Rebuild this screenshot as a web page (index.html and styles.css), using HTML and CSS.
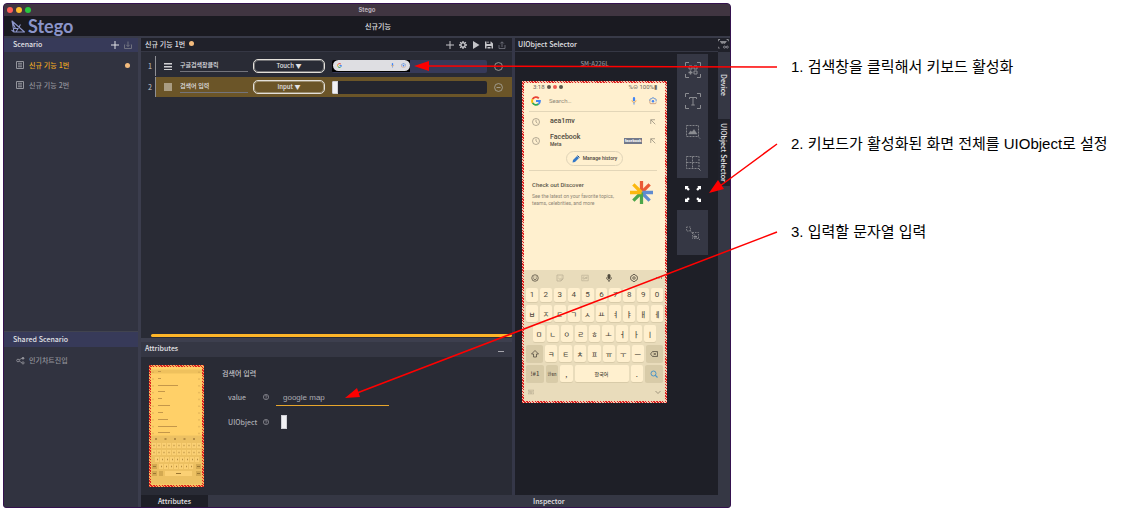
FILE: index.html
```html
<!DOCTYPE html>
<html lang="ko">
<head>
<meta charset="utf-8">
<title>Stego</title>
<link rel="stylesheet" href="styles.css">
</head>
<body>
<svg class="sprites" aria-hidden="true">
  <symbol id="plus" viewBox="0 0 16 16"><path d="M8 0v16M0 8h16" stroke="currentColor" stroke-width="2" fill="none"/></symbol>
  <symbol id="import" viewBox="0 0 16 16"><path d="M1 7v8h14V7M8 1v10M4.500 7.500 8 11l3.500-3.500" stroke="currentColor" stroke-width="1.800" fill="none"/></symbol>
  <symbol id="share-up" viewBox="0 0 16 16"><path d="M2 8v7h12V8M8 12V2M4.500 5 8 1.500 11.500 5" stroke="currentColor" stroke-width="1.600" fill="none"/></symbol>
  <symbol id="doc" viewBox="0 0 16 16"><path d="M1 1h14v14H1zM4 4.500h8M4 8h8M4 11.500h8" stroke="currentColor" stroke-width="2" fill="none"/></symbol>
  <symbol id="gear" viewBox="0 0 16 16"><circle cx="8" cy="8" r="4.300" fill="none" stroke="currentColor" stroke-width="3"/><path d="M8 0v3M8 13v3M0 8h3M13 8h3M2.300 2.300l2 2M11.700 11.700l2 2M2.300 13.700l2-2M11.700 4.300l2-2" stroke="currentColor" stroke-width="2.600"/></symbol>
  <symbol id="play" viewBox="0 0 16 16"><path d="M2 0l13 8-13 8z" fill="currentColor"/></symbol>
  <symbol id="save" viewBox="0 0 16 16"><path fill-rule="evenodd" d="M0 1h3v5h8V1h1l4 4v10h-3v-5H3v5H0zM5 1h2v3H5zM5 12h6v3H5z" fill="currentColor"/></symbol>
  <symbol id="minus-circle" viewBox="0 0 16 16"><circle cx="8" cy="8" r="7" fill="none" stroke="currentColor" stroke-width="1.500"/><path d="M4.500 8h7" stroke="currentColor" stroke-width="1.500"/></symbol>
  <symbol id="help" viewBox="0 0 16 16"><circle cx="8" cy="8" r="7" fill="none" stroke="currentColor" stroke-width="1.600"/><path d="M5.500 6.500c0-3.500 5-3 5-.3C10.500 8 8 8 8 10M8 11v2" stroke="currentColor" stroke-width="1.600" fill="none"/></symbol>
  <symbol id="share" viewBox="0 0 18 16"><path d="M4 8l9-5M4 8l9 5" stroke="currentColor" stroke-width="1.500"/><circle cx="4" cy="8" r="2.600" fill="#313340" stroke="currentColor" stroke-width="1.700"/><circle cx="14" cy="3.500" r="2.500" fill="currentColor"/><circle cx="14" cy="12.800" r="2.200" fill="#313340" stroke="currentColor" stroke-width="1.700"/></symbol>
  <symbol id="google" viewBox="0 0 20 20"><g fill="none" stroke-width="3.800"><path d="M15.600 4.600A7.800 7.800 0 0 0 3.200 6.200" stroke="#ea4335"/><path d="M3.200 6.200a7.800 7.800 0 0 0 0 7.600" stroke="#fbbc05"/><path d="M3.200 13.800a7.800 7.800 0 0 0 11.800 2.200" stroke="#34a853"/><path d="M15 16a7.800 7.800 0 0 0 2.800-6H10" stroke="#4285f4"/></g></symbol>
  <symbol id="mic" viewBox="0 0 12 18"><rect x="3.500" y="0" width="5" height="10" rx="2.500" fill="#4285f4"/><path d="M1.500 7.500c0 6 9 6 9 0" fill="none" stroke="#f0a03c" stroke-width="1.900"/><path d="M6 12v5" stroke="#4285f4" stroke-width="2"/></symbol>
  <symbol id="lens" viewBox="0 0 18 16"><path d="M2 8V5q0-2 2-2h2l1-2h4l1 2h2q2 0 2 2v4" fill="none" stroke="#4a83d6" stroke-width="1.900"/><path d="M2 7v5q0 2 2 2h10q2 0 2-3" fill="none" stroke="#c99777" stroke-width="1.900"/><circle cx="9" cy="8.500" r="2.800" fill="#4285f4"/></symbol>
  <symbol id="clock" viewBox="0 0 16 16"><circle cx="8" cy="8" r="7" fill="none" stroke="currentColor" stroke-width="1.400"/><path d="M8 3.500V8l3 2.500" fill="none" stroke="currentColor" stroke-width="1.400"/></symbol>
  <symbol id="nw" viewBox="0 0 12 12"><path d="M1.500 10V1.500H10M1.500 1.500l9 9" fill="none" stroke="currentColor" stroke-width="1.500"/></symbol>
  <symbol id="frame" viewBox="0 0 32 32"><path d="M1 8V1h7M24 1h7v7M31 24v7h-7M8 31H1v-7" fill="none" stroke="currentColor" stroke-width="2"/></symbol>
  <symbol id="corner" viewBox="0 0 12 12"><path d="M0 0h9L6.500 2.500l5 5-4 4-5-5L0 9z" fill="currentColor"/></symbol>
</svg>

<div class="app">
  <header class="titlebar">
    <div class="lights"><i class="red"></i><i class="yellow"></i><i class="green"></i></div>
    <span>Stego</span>
  </header>
  <div class="brandbar">
    <div class="brand">
      <svg class="logo" viewBox="0 0 30 26"><path d="M2 2 27 24H6zM2 2l7 15M5 17h9l5-8M14 17l-4 7M1 20l5 4" fill="none" stroke="currentColor" stroke-width="2.200" stroke-linejoin="round"/></svg>
      <span>Stego</span>
    </div>
    <span class="project">신규기능</span>
  </div>

  <div class="main">
    <aside class="sidebar">
      <section class="scenarios">
        <div class="side-head"><h2>Scenario</h2>
          <button aria-label="추가"><svg class="i8"><use href="#plus"/></svg></button>
          <button class="dim" aria-label="가져오기"><svg class="i8"><use href="#import"/></svg></button>
        </div>
        <a class="item active" href="#one"><svg class="i8"><use href="#doc"/></svg><span>신규 기능 1번</span><i class="dot"></i></a>
        <a class="item" href="#two"><svg class="i8"><use href="#doc"/></svg><span>신규 기능 2번</span></a>
      </section>
      <section class="shared">
        <div class="side-head"><h2>Shared Scenario</h2></div>
        <a class="item" href="#shared"><svg class="i9"><use href="#share"/></svg><span>인기차트진입</span></a>
      </section>
    </aside>

    <div class="workspace">
      <div class="panels">
        <main class="editor">
          <div class="head"><h2>신규 기능 1번</h2><i class="dot"></i>
            <div class="tools">
              <button aria-label="추가"><svg class="i8"><use href="#plus"/></svg></button>
              <button aria-label="설정"><svg class="i8"><use href="#gear"/></svg></button>
              <button aria-label="실행"><svg class="i8"><use href="#play"/></svg></button>
              <button aria-label="저장"><svg class="i8"><use href="#save"/></svg></button>
              <button class="dim" aria-label="내보내기"><svg class="i8"><use href="#share-up"/></svg></button>
            </div>
          </div>
          <div class="steps">
            <div class="step">
              <span class="num">1</span>
              <div class="step-body">
                <i class="grip"></i>
                <input class="name" aria-label="단계 이름" value="구글검색창클릭">
                <select aria-label="동작"><option>Touch ▼</option></select>
                <div class="target blue"><div class="shot"><div class="pill"><svg class="i5"><use href="#google"/></svg><svg class="i5 push"><use href="#mic"/></svg><svg class="i5"><use href="#lens"/></svg></div></div></div>
                <button aria-label="삭제"><svg class="i9"><use href="#minus-circle"/></svg></button>
              </div>
            </div>
            <div class="step selected">
              <span class="num">2</span>
              <div class="step-body">
                <i class="grip solid"></i>
                <input class="name" aria-label="단계 이름" value="검색어 입력">
                <select aria-label="동작"><option>Input ▼</option></select>
                <div class="target"><div class="chip"></div></div>
                <button aria-label="삭제"><svg class="i9"><use href="#minus-circle"/></svg></button>
              </div>
            </div>
          </div>
          <div class="scrollbar"></div>
          <section class="attributes">
            <div class="attr-head"><h2>Attributes</h2><button aria-label="접기"><i></i></button></div>
            <div class="attr-body">
              <svg class="thumb" viewBox="0 0 51 117">
                <path d="M0 2h51v4H0z" fill="#efc15d"/>
                <g stroke="#c4974a" stroke-width="1">
                  <path d="M7 4h3M7 11h3M7 18h20M7 24h7M7 31h4M7 38h12M7 45h5M7 52h10M7 59h19M7 65h12"/>
                  <path d="M2 4v64M48 4v64" stroke-dasharray="1.500 5.300" opacity=".7"/>
                </g>
                <path d="M0 68h51v49H0z" fill="#edc163"/>
                <path d="M4 71.500h44" stroke="#b58d44" stroke-width="2" stroke-dasharray="2 7.500"/>
                <g stroke="#fbd074" stroke-width="5" stroke-dasharray="4 1"><path d="M1 78h49M1 85h49M4 92h44M8 99h35"/><path d="M14 106h27" stroke-dasharray="none"/></g>
                <g stroke="#b58d44" stroke-width="1.500" stroke-dasharray="1 4"><path d="M2.500 78h48M2.500 85h48M6 92h42M10 99h33"/></g>
                <path d="M1 99h5M45 99h5M1 106h5M8 106h4M45 106h5" stroke="#d3a951" stroke-width="5"/>
                <path d="M25 106h5M2 106h3M46 106h3M2 99h3M46 99h3" stroke="#9c7732"/>
              </svg>
              <form class="fields">
                <h3>검색어 입력</h3>
                <div class="field"><label for="value">value</label><svg class="i6"><use href="#help"/></svg><input id="value" value="google map"></div>
                <div class="field"><label for="object">UIObject</label><svg class="i6"><use href="#help"/></svg><button type="button" id="object" class="chip"></button></div>
              </form>
            </div>
          </section>
        </main>

        <section class="selector">
          <div class="head"><h2>UIObject Selector</h2></div>
          <div class="selector-body">
            <div class="device">
              <p class="model">SM-A226L</p>
              <div class="phone">
                <div class="status"><span>3:18</span><i class="s1"></i><i class="s2"></i><i class="s1"></i><span class="right">%⊝ 100%▮</span></div>
                <div class="search"><svg class="i10"><use href="#google"/></svg><span>Search…</span><svg class="i8"><use href="#mic"/></svg><svg class="i8"><use href="#lens"/></svg></div>
                <div class="hist"><svg class="i8"><use href="#clock"/></svg><div>aea1mv</div><svg class="i6"><use href="#nw"/></svg></div>
                <div class="hist"><svg class="i8"><use href="#clock"/></svg><div>Facebook<small>Meta</small></div><b>facebook</b><svg class="i6"><use href="#nw"/></svg></div>
                <button class="manage"><svg class="i8" viewBox="0 0 16 16"><path d="M1 15l1-5 8-8 4 4-8 8z" fill="#3478c8"/><path d="M11 1l4 4" stroke="#224f88" stroke-width="2"/></svg>Manage history</button>
                <div class="discover">
                  <div><h4>Check out Discover</h4><p>See the latest on your favorite topics,<br>teams, celebrities, and more</p></div>
                  <svg class="spark" viewBox="0 0 24 24"><g stroke-width="3.400"><path d="M12 0v12" stroke="#ea5b35"/><path d="M12 12 20.500 3.500" stroke="#ea5b35"/><path d="M12 12h12M12 12l8.500 8.500" stroke="#5f8bd0"/><path d="M12 12v12M12 12l-8.500 8.500" stroke="#4ca64a"/><path d="M12 12H0M12 12 3.500 3.500" stroke="#fbb80f"/></g></svg>
                </div>
                <div class="keyboard">
                  <div class="kbar">
                    <svg class="i8" viewBox="0 0 16 16"><circle cx="8" cy="8" r="6.500" fill="none" stroke="currentColor" stroke-width="1.500"/><path d="M4.500 9q3.500 5 7 0M5.500 5v2M10.500 5v2" fill="none" stroke="currentColor" stroke-width="1.500"/></svg>
                    <svg class="i8 faint" viewBox="0 0 16 16"><path d="M2 2h12v8l-4 4H2zM14 10h-4v4M5 6h1M10 6h1M5 9q2 2 4 0" fill="none" stroke="currentColor" stroke-width="1.500"/></svg>
                    <svg class="i8 faint" viewBox="0 0 16 16"><path d="M1.500 2.500h13v11h-13zM4 6h3M4 6v4h3V8M9 6v4M11 10V6h2M11 8h2" fill="none" stroke="currentColor" stroke-width="1.300"/></svg>
                    <svg class="i8" viewBox="0 0 16 16"><rect x="5" y="0" width="6" height="10" rx="3" fill="currentColor"/><path d="M3 7c0 7 10 7 10 0M8 12v4" fill="none" stroke="currentColor" stroke-width="1.700"/></svg>
                    <svg class="i8" viewBox="0 0 16 16"><path d="M6 1h4l1 2 3 1 1 4-1 4-3 1-1 2H6l-1-2-3-1-1-4 1-4 3-1z" fill="none" stroke="currentColor" stroke-width="1.600"/><circle cx="8" cy="8" r="2.500" fill="none" stroke="currentColor" stroke-width="1.600"/></svg>
                    <svg class="i8" viewBox="0 0 16 16"><path d="M2 8h2M7 8h2M12 8h2" stroke="currentColor" stroke-width="2"/></svg>
                  </div>
                  <div class="keys nums"><kbd>1</kbd><kbd>2</kbd><kbd>3</kbd><kbd>4</kbd><kbd>5</kbd><kbd>6</kbd><kbd>7</kbd><kbd>8</kbd><kbd>9</kbd><kbd>0</kbd></div>
                  <div class="keys"><kbd>ㅂ</kbd><kbd>ㅈ</kbd><kbd>ㄷ</kbd><kbd>ㄱ</kbd><kbd>ㅅ</kbd><kbd>ㅛ</kbd><kbd>ㅕ</kbd><kbd>ㅑ</kbd><kbd>ㅐ</kbd><kbd>ㅔ</kbd></div>
                  <div class="keys inset"><kbd>ㅁ</kbd><kbd>ㄴ</kbd><kbd>ㅇ</kbd><kbd>ㄹ</kbd><kbd>ㅎ</kbd><kbd>ㅗ</kbd><kbd>ㅓ</kbd><kbd>ㅏ</kbd><kbd>ㅣ</kbd></div>
                  <div class="keys letters"><kbd class="fn"><svg class="i8" viewBox="0 0 16 16"><path d="M8 1l7 7h-4v6H5V8H1z" fill="none" stroke="currentColor" stroke-width="1.500"/></svg></kbd><kbd>ㅋ</kbd><kbd>ㅌ</kbd><kbd>ㅊ</kbd><kbd>ㅍ</kbd><kbd>ㅠ</kbd><kbd>ㅜ</kbd><kbd>ㅡ</kbd><kbd class="fn"><svg class="i8" viewBox="0 0 16 16"><path d="M5 3h10v10H5L1 8zM7 5.500l5 5M12 5.500l-5 5" fill="none" stroke="currentColor" stroke-width="1.500"/></svg></kbd></div>
                  <div class="keys bottom"><kbd class="fn sym">!#1</kbd><kbd class="fn lang">한⁄En</kbd><kbd>,</kbd><kbd class="space">한국어</kbd><kbd>.</kbd><kbd class="fn"><svg class="i8 find" viewBox="0 0 16 16"><circle cx="7" cy="7" r="5" fill="none" stroke="currentColor" stroke-width="2"/><path d="M10.500 10.500l4.500 4.500" stroke="currentColor" stroke-width="2.200"/></svg></kbd></div>
                  <div class="knav"><svg class="i6" viewBox="0 0 16 12"><path d="M1 1h14v10H1zM3 4h10M3 6.500h10M5 9h6" fill="none" stroke="currentColor" stroke-width="1.300" stroke-dasharray="2 1"/></svg><svg class="i6" viewBox="0 0 12 12"><path d="M1 4l5 5 5-5" fill="none" stroke="currentColor" stroke-width="1.600"/></svg></div>
                </div>
              </div>
            </div>
            <div class="toolbar">
              <button aria-label="QR"><svg viewBox="0 0 32 32"><use href="#frame"/><path d="M8 8h6v6H8zM18 8h6v6h-6zM18 18h6v6h-6z" fill="none" stroke="currentColor" stroke-width="2"/><path d="M11 17v8M7 21h8" stroke="currentColor" stroke-width="3"/></svg></button>
              <button aria-label="텍스트"><svg viewBox="0 0 32 32"><use href="#frame"/><path d="M9 12V9h14v3M16 9v15M12.500 24h7" fill="none" stroke="currentColor" stroke-width="2"/></svg></button>
              <button aria-label="이미지"><svg viewBox="0 0 32 32"><path d="M3 3h24v22H3z" fill="none" stroke="currentColor" stroke-width="1.800" stroke-dasharray="4 2"/><path d="M7 20l4-6 3 2 4-5 6 9zM26 25l5 5" fill="currentColor" stroke="currentColor"/></svg></button>
              <button aria-label="영역"><svg viewBox="0 0 32 32"><path d="M3 3h25v24H3zM15 3v24M3 15h25" fill="none" stroke="currentColor" stroke-width="1.800" stroke-dasharray="4 2"/><path d="M27 27l4 4" stroke="currentColor" stroke-width="2"/></svg></button>
              <button class="on" aria-label="전체 화면"><svg viewBox="0 0 32 32"><use href="#corner" width="10" height="10"/><use href="#corner" width="10" height="10" transform="translate(32 0) scale(-1 1)"/><use href="#corner" width="10" height="10" transform="translate(0 32) scale(1 -1)"/><use href="#corner" width="10" height="10" transform="translate(32 32) scale(-1 -1)"/></svg></button>
              <button class="tall" aria-label="상대 영역"><svg viewBox="0 0 32 32"><path d="M3 4h8v8H3zM15 15h12v12H15z" fill="none" stroke="currentColor" stroke-width="1.600" stroke-dasharray="3 2"/><path d="M9 10l12 12M27 27l4 4" stroke="currentColor" stroke-width="1.800" stroke-dasharray="4 2"/><path d="M17 22h7v3h-7z" fill="currentColor"/></svg></button>
            </div>
          </div>
        </section>
        <nav class="side-tabs">
          <svg class="capture" viewBox="0 0 32 28"><path d="M1 6V1h5M25 1h5v5M6 7h19M8 10h15M12 10v4M18 10v4" fill="none" stroke="currentColor" stroke-width="2.500"/><circle cx="19" cy="23" r="3" fill="none" stroke="currentColor" stroke-width="2.200"/><circle cx="27" cy="23" r="3" fill="none" stroke="currentColor" stroke-width="2.200"/><path d="M1 22v4h4" fill="none" stroke="currentColor" stroke-width="2"/></svg>
          <a href="#device">Device</a>
          <a class="current" href="#selector">UIObject Selector</a>
          <div class="rest"></div>
        </nav>
      </div>
      <footer class="bottom-tabs"><a class="current" href="#attributes">Attributes</a><a class="inspector" href="#inspector">Inspector</a></footer>
    </div>
  </div>
</div>

<ol class="notes">
  <li>1. 검색창을 클릭해서 키보드 활성화</li>
  <li>2. 키보드가 활성화된 화면 전체를 UIObject로 설정</li>
  <li>3. 입력할 문자열 입력</li>
</ol>

<svg class="arrows" viewBox="0 0 800 420" aria-hidden="true">
  <path d="M777 67 427 66M777 144l-57 42M777 232 357 393" stroke="#f00" stroke-width="1.500"/>
  <path d="M414 66l15-5v10zM709 193l9-13 6 9zM345 398l12-10 3 9z" fill="#f00"/>
</svg>
</body>
</html>
```
FILE: styles.css
```css
* { box-sizing: border-box; }
body {
  margin: 0;
  padding: 3px 0 8px 3px;
  min-height: 100vh;
  display: flex;
  position: relative;
  background: #fff;
  font: 500 7px/10px "Noto Sans CJK KR", sans-serif;
  color: #e2e2e6;
}
h2, h3, h4, p, ol { margin: 0; padding: 0; font: inherit; }
i { display: block; flex: none; }
a { color: inherit; text-decoration: none; }
svg { display: block; flex: none; }
button {
  display: block;
  padding: 0;
  border: 0;
  background: none;
  color: inherit;
  font: inherit;
}
input, select { font: inherit; color: inherit; border: 0; padding: 0; margin: 0; background: none; min-width: 0; }
.sprites { position: absolute; width: 0; height: 0; }
.i5 { width: 5px; height: 5px; }
.i6 { width: 6px; height: 6px; }
.i8 { width: 8px; height: 8px; }
.i9 { width: 9px; height: 9px; }
.i10 { width: 10px; height: 10px; }
.dim { color: #777883; }
.dot { width: 5px; height: 5px; border-radius: 50%; background: #f3bb7d; }

.app {
  flex: 1;
  min-width: 0;
  display: flex;
  flex-direction: column;
  border: 1px solid #35124f;
  border-radius: 4px 4px 3px 3px;
  background: #313340;
  overflow: hidden;
}
.titlebar {
  display: grid;
  grid-template-columns: 1fr auto 1fr;
  align-items: center;
  height: 12px;
  background: #403541;
  color: #bbb2bc;
  font: 700 6px/12px Inter, sans-serif;
}
.lights { display: flex; gap: 3px; padding-left: 3px; }
.lights i { width: 6px; height: 6px; border-radius: 50%; }
.red { background: #ff5f57; }
.yellow { background: #febc2e; }
.green { background: #28c840; }
.brandbar {
  display: grid;
  grid-template-columns: 1fr auto 1fr;
  align-items: center;
  height: 20px;
  background: #1a1a21;
}
.project { padding-left: 22px; }
.brand { display: flex; align-items: center; gap: 2px; padding-left: 7px; color: #8b94c9; font: 700 18px/20px Lato, sans-serif; }
.logo { width: 15px; height: 13px; }

.main { flex: 1; display: flex; border-top: 2px solid #383a48; }
.sidebar { width: 137px; flex: none; display: flex; flex-direction: column; border-right: 3px solid #3b3d4d; background: #313340; }
.scenarios { flex: 1; }
.shared { height: 176px; border-top: 1px solid #41434f; }
.side-head { display: flex; align-items: center; gap: 5px; height: 15px; padding: 0 6px 2px 9px; background: #373a59; }
.side-head h2 { flex: 1; }
.side-head button { padding-top: 2px; }
.scenarios .side-head { height: 14px; margin-bottom: 3px; }
.item { display: flex; align-items: center; gap: 5px; height: 20px; padding: 0 8px 0 12px; color: #93949b; }
.item span { flex: 1; }
.active span { color: #f0aa22; }
.shared .item { height: 26px; gap: 4px; }

.workspace { flex: 1; min-width: 0; display: flex; flex-direction: column; }
.panels { flex: 1; display: flex; }
.head { display: flex; align-items: center; gap: 4px; height: 14px; padding: 0 6px 2px 4px; background: #20212a; border-bottom: 1px solid #353744; }
.editor { flex: 1; min-width: 0; display: flex; flex-direction: column; background: #292b35; }
.tools { display: flex; gap: 5px; margin-left: auto; color: #c4c4c8; padding-top: 2px; }
.steps { flex: 1; display: grid; align-content: start; gap: 1px; padding-top: 4px; }
.step { display: flex; height: 20px; align-items: stretch; }
.num { width: 15px; padding-left: 7px; line-height: 20px; color: #aaabb0; border-right: 1px solid #8f9096; }
.step-body { flex: 1; min-width: 0; display: flex; align-items: center; padding: 0 9px 0 8px; }
.selected .step-body { background: #6b5528; }
.grip { width: 8px; height: 7px; margin-right: 8px; background: repeating-linear-gradient(#d0d0d2 0 1px, #80818a 1px 2px, transparent 2px 3px); }
.grip.solid { background: #aa9d83; height: 8px; }
.name { width: 68px; height: 12px; margin: 0 5px 0 0; padding-bottom: 3px; border-bottom: 1px solid #73747c; font-size: 6px; line-height: 8px; }
.step select {
  appearance: none;
  width: 72px;
  height: 14px;
  margin-right: 7px;
  border: 1px solid #e3e0da;
  outline: 1px solid #e3e0da66;
  outline-offset: -2px;
  border-radius: 5px;
  font-size: 6px;
  line-height: 10px;
  text-align-last: center;
}
.target { flex: 1; height: 13px; margin-right: 7px; border-radius: 2px; background: #24252e; overflow: hidden; }
.blue { background: #373a59; }
.shot { width: 78px; height: 12px; background: #000; }
.pill { display: flex; align-items: center; gap: 6px; height: 11px; margin-left: 1px; padding: 0 4px; border-radius: 6px; background: #dedee2; }
.push { margin-left: auto; }
.chip { width: 6px; height: 13px; background: #f1f1f4; border: 1px solid #cfcfd5; }
.step-body > button { color: #aaa89f; }
.scrollbar { height: 3px; margin: 0 0 1px 10px; border-radius: 2px; background: #fdb528; }
.attributes { border-top: 4px solid #3d3f4e; }
.attr-head { display: flex; justify-content: space-between; align-items: center; height: 15px; padding: 0 8px 3px 4px; background: #353744; }
.attr-head button { padding-top: 7px; }
.attr-head i { width: 6px; height: 1px; background: #a5a5ac; }
.attr-body { display: flex; gap: 18px; padding: 8px; }
.thumb, .phone { border: 2px solid transparent; }
.thumb { width: 55px; height: 122px; background: linear-gradient(#ffd068, #ffd068) padding-box, repeating-linear-gradient(45deg, #de2020 0 1px, #f7b45c 1px 2px) border-box; }
.fields { padding-top: 3px; color: #a9aab1; }
.fields h3 { margin-bottom: 6px; color: #c7c7cb; }
.field { display: flex; align-items: center; height: 25px; padding-left: 6px; }
.field label { width: 35px; }
.field input { width: 113px; height: 16px; margin: 3px 0 0 7px; padding: 0 7px; border-bottom: 1px solid #e7a62c; font: 8px/14px "Liberation Sans", sans-serif; }
.field .chip { margin-left: 12px; height: 14px; }

.selector { width: 206px; flex: none; border-left: 3px solid #353748; background: #1e1f27; }
.selector .head { padding-left: 3px; }
.selector-body { display: flex; gap: 10px; padding: 2px 10px 0 7px; }
.device { flex: 1; min-width: 0; }
.model { height: 27px; padding-top: 5px; text-align: center; font-size: 6px; color: #92939a; }
.phone { height: 322px; display: flex; flex-direction: column; background: linear-gradient(#fff0cf, #fff0cf) padding-box, repeating-linear-gradient(45deg, #de2020 0 1px, #f3cdb4 1px 2px) border-box; color: #6d675a; font: 500 6px/7px Roboto, sans-serif; }
.status { display: flex; align-items: center; gap: 2px; height: 7px; padding: 0 8px 0 9px; font-weight: 400; }
.status i { width: 4px; height: 4px; border-radius: 50%; }
.s1 { background: #5d574b; }
.s2 { background: #ee5a51; }
.right { margin-left: auto; }
.search { display: flex; align-items: center; gap: 11px; height: 22px; margin: 0 5px; padding: 0 3px 0 2px; border-bottom: 1px solid #e3d6b8; color: #8f8878; }
.search span { flex: 1; margin-left: -3px; font-weight: 400; }
.hist { display: flex; align-items: center; gap: 8px; height: 19px; padding: 0 9px 0 8px; color: #938b7a; }
.hist div { flex: 1; margin-left: 2px; color: #4e493e; font-size: 7px; }
.hist small { display: block; font-size: 5px; line-height: 6px; }
.hist b { width: 18px; height: 6px; background: #73798b; color: #fff; font-size: 4px; line-height: 6px; text-align: center; }
.manage { display: flex; align-items: center; align-self: center; gap: 3px; height: 15px; margin: 1px 0 4px; padding: 0 5px; border: 1px solid #e0d4b8; border-radius: 8px; color: #4e493e; font-size: 5px; }
.discover { flex: 1; display: flex; justify-content: space-between; margin: 0 8px 0 5px; padding: 7px 4px 0 3px; border-top: 1px solid #e3d6b8; }
.discover h4 { margin: 3px 0 5px; font-size: 6px; line-height: 7px; color: #5e584b; }
.discover p { font-size: 5px; line-height: 7px; font-weight: 400; color: #8d8575; white-space: nowrap; }
.spark { width: 23px; height: 23px; margin-top: 3px; }
.keyboard { height: 131px; background: #e9dcbb; color: #504a3d; padding: 0 2px; }
.kbar { display: flex; justify-content: space-between; align-items: center; height: 16px; padding: 0 0 0 5px; }
.faint { opacity: .3; }
.keys { display: flex; gap: 2px; height: 17px; margin-bottom: 3px; }
.keys kbd { flex: 1; display: flex; align-items: center; justify-content: center; min-width: 0; border-radius: 2px; background: #fff0cf; box-shadow: 0 1px #d8cba9; font: 500 7px/8px "Noto Sans CJK KR", sans-serif; }
.keys.nums { height: 14px; margin: 2px 0 3px; }
.nums kbd { font: 8px/10px Roboto, sans-serif; }
.inset { padding: 0 7px; }
.letters .fn { flex: 0 0 17px; }
.keys .fn { background: #d8cba8; }
.bottom .fn { flex: 0 0 18px; }
.keys .sym { font-size: 6px; }
.bottom .lang { flex: 0 0 12px; font-size: 4px; }
.bottom .space { flex: 0 0 54px; font-size: 5px; }
.find { color: #4c95c6; }
.knav { display: flex; justify-content: space-between; align-items: center; height: 14px; padding: 0 2px; opacity: .6; }
.toolbar { width: 31px; flex: none; align-self: flex-start; background: #353744; color: #8b8c91; }
.toolbar button { display: grid; place-items: center; width: 100%; height: 31px; }
.toolbar svg { width: 16px; height: 16px; }
.toolbar .on { background: #1e1f27; color: #fff; height: 32px; }
.toolbar .tall { height: 45px; }

.side-tabs { width: 12px; flex: none; display: flex; flex-direction: column; background: #20212a; }
.side-tabs a { display: flex; align-items: center; justify-content: center; height: 67px; writing-mode: vertical-rl; line-height: 12px; background: #353744; white-space: nowrap; }
.side-tabs .current { background: #20212a; }
.capture { width: 11px; height: 10px; margin: 1px 0 3px; color: #a5a5aa; }
.rest { flex: 1; background: #353744; }
.bottom-tabs { display: flex; justify-content: space-between; height: 12px; background: #353744; line-height: 12px; }
.bottom-tabs .current { width: 67px; text-align: center; background: #1e1f27; }
.inspector { width: 197px; }

.notes { width: 399px; flex: none; padding: 53px 0 0 60px; list-style: none; color: #000; font: 15px/22px "Liberation Sans", "Noto Sans CJK KR", sans-serif; white-space: nowrap; }
.notes li { margin-bottom: 55px; }
.notes li + li { margin-bottom: 0; }
.notes li + li + li { margin-top: 66px; }
.arrows { position: absolute; left: 0; top: 0; width: 800px; height: 420px; pointer-events: none; }
```
